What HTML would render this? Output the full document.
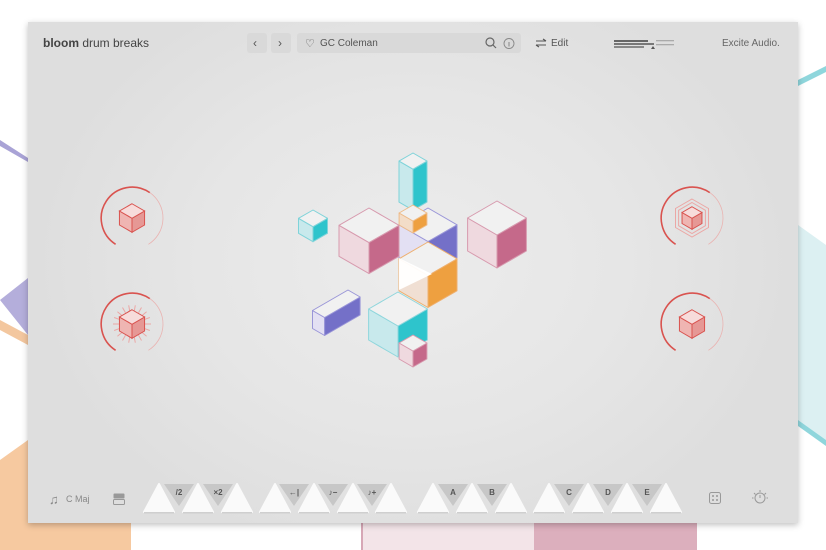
<!DOCTYPE html>
<html><head><meta charset="utf-8">
<style>
*{margin:0;padding:0;box-sizing:border-box}
body{width:826px;height:550px;overflow:hidden;background:#fff;position:relative;font-family:"Liberation Sans",sans-serif}
#bg{position:absolute;left:0;top:0}
#panel{position:absolute;left:28px;top:22px;width:770px;height:501px;background:radial-gradient(ellipse 380px 300px at 385px 240px,#ececec 0%,#e6e6e6 55%,#dedede 100%);box-shadow:0 2px 6px rgba(0,0,0,.25)}
.t{position:absolute;color:#555;font-size:11px;white-space:nowrap}
.btn{position:absolute;background:#d9d9d9;border-radius:3px}
#art{position:absolute;left:0;top:0}
</style></head><body>
<svg id="bg" width="826" height="550">
<polygon points="0,140 28,158 28,162 0,146" fill="#a9a3d6"/>
<polygon points="0,300 28,278 28,335" fill="#b4aedb"/>
<polygon points="0,320 28,335 28,345 0,330" fill="#f3c79f"/>
<polygon points="0,460 28,440 28,550 0,550" fill="#f6c9a0"/>
<rect x="0" y="523" width="131" height="27" fill="#f6c9a0"/>
<rect x="361" y="523" width="173" height="27" fill="#f3e4e8"/>
<rect x="361" y="523" width="2" height="27" fill="#d7a7b6"/>
<rect x="534" y="523" width="163" height="27" fill="#dcafbd"/>
<polygon points="798,80 826,66 826,72 798,86" fill="#8fd6dc"/>
<polygon points="798,225 826,245 826,440 798,420" fill="#dcf0f2"/>
<polygon points="798,420 826,440 826,446 798,426" fill="#8fd6dc"/>
</svg>
<div id="panel">
<div class="t" style="left:15px;top:14px;font-size:12px;color:#444"><b>bloom</b> drum breaks</div>
<div class="btn" style="left:219px;top:11px;width:20px;height:20px"></div>
<div class="btn" style="left:243px;top:11px;width:20px;height:20px"></div>
<div class="t" style="left:225px;top:14px;font-size:12px">‹</div>
<div class="t" style="left:250px;top:14px;font-size:12px">›</div>
<div class="btn" style="left:269px;top:11px;width:224px;height:20px"></div>
<div class="t" style="left:277px;top:15px;font-size:11px">♡</div>
<div class="t" style="left:292px;top:16px;font-size:10px;color:#555">GC Coleman</div>
<svg style="position:absolute;left:457px;top:15px" width="34" height="13"><circle cx="5" cy="5" r="4" fill="none" stroke="#666" stroke-width="1.2"/><line x1="8" y1="8" x2="11" y2="11" stroke="#666" stroke-width="1.2"/><circle cx="24" cy="6.5" r="5" fill="none" stroke="#888" stroke-width=".9"/><line x1="24" y1="5" x2="24" y2="9.5" stroke="#888"/></svg>
<svg style="position:absolute;left:507px;top:16px" width="12" height="10"><path d="M1 3H11M8 1L11 3M11 7H1M4 9L1 7" stroke="#555" fill="none" stroke-width="1.1"/></svg>
<div class="t" style="left:523px;top:16px;font-size:10px">Edit</div>
<svg style="position:absolute;left:586px;top:17px" width="62" height="10"><rect x="0" y="1" width="34" height="2" fill="#666"/><rect x="0" y="4" width="40" height="2" fill="#777"/><rect x="0" y="7" width="30" height="2" fill="#888"/><rect x="42" y="1" width="18" height="1.3" fill="#aaa"/><rect x="42" y="5" width="18" height="1.3" fill="#aaa"/><path d="M39 7l2 3h-4z" fill="#555"/></svg>
<div class="t" style="left:694px;top:16px;font-size:10px;color:#666">Excite Audio.</div>
<div class="t" style="left:21px;top:470px;font-size:13px;color:#888">♫</div>
<div class="t" style="left:38px;top:472px;font-size:9px;color:#888">C Maj</div>
<svg style="position:absolute;left:85px;top:471px" width="12" height="12"><rect x="0.5" y="0.5" width="11" height="5" fill="#999" rx="1"/><rect x="0.5" y="6.5" width="11" height="5" fill="none" stroke="#999" rx="1"/></svg>
<svg style="position:absolute;left:681px;top:470px" width="12" height="12"><rect x=".5" y=".5" width="11" height="11" rx="2" fill="none" stroke="#999"/><circle cx="4" cy="4" r="1" fill="#999"/><circle cx="8" cy="8" r="1" fill="#999"/><circle cx="8" cy="4" r="1" fill="#999"/><circle cx="4" cy="8" r="1" fill="#999"/></svg>
<svg style="position:absolute;left:724px;top:467px" width="16" height="16"><circle cx="8" cy="9" r="5" fill="none" stroke="#999"/><line x1="8" y1="9" x2="8" y2="6" stroke="#999"/><path d="M8 1v2M2 4l1.5 1.5M14 4l-1.5 1.5M0 9h1.5M16 9h-1.5" stroke="#999"/></svg>
</div>
<svg id="art" width="826" height="550"></svg>
<script>
var s='',k=Math.sqrt(3)/2;
function box(ox,oy,dx,dy,dz,top,lf,rf,st){
 var P0=[ox,oy],P1=[ox+dx*k,oy+dx/2],P3=[ox-dy*k,oy+dy/2],P2=[P1[0]-dy*k,P1[1]+dy/2];
 function p(a){return a.map(function(q){return q[0].toFixed(1)+','+q[1].toFixed(1)}).join(' ')}
 function d(q){return [q[0],q[1]+dz]}
 s+='<polygon points="'+p([P3,P2,d(P2),d(P3)])+'" fill="'+lf+'" stroke="'+st+'" stroke-width="1" stroke-linejoin="round"/>';
 s+='<polygon points="'+p([P2,P1,d(P1),d(P2)])+'" fill="'+rf+'" stroke="'+st+'" stroke-width="1" stroke-linejoin="round"/>';
 s+='<polygon points="'+p([P0,P1,P2,P3])+'" fill="'+top+'" stroke="'+st+'" stroke-width="1" stroke-linejoin="round"/>';
}
var T='#f1f1f1';
box(413,153,16.2,16.2,41,T,'#c8e9ec','#2ec4cc','#7fd3d9');
box(428,208,33.5,33.5,33,T,'#e3e0f3','#7470c8','#9a96d8');
box(413,205,16,16,12,T,'#f3ddc8','#eea040','#eebb88');
box(369,208,34.6,34.6,31,T,'#efd9df','#c5698a','#d79aae');
box(428,242,33.5,33.5,32,T,'#f0dfd3','#eea040','#eeb070');
box(497,201,34,34,33,T,'#efd9df','#c5698a','#d79aae');
box(313,210,16.7,16.7,15,T,'#c8e9ec','#2ec4cc','#7fd3d9');
box(348,290,14,41,18,T,'#e3e0f3','#7470c8','#9a96d8');
box(398,292,34,34,31,T,'#c8e9ec','#2ec4cc','#8fd6dc');
box(413,335,16,16,16,T,'#efd9df','#c5698a','#d79aae');
s+='<polygon points="399,258 432,274 399,290" fill="#fff" opacity=".95"/>';
function arc(cx,cy,r,a1,a2){var x1=cx+r*Math.sin(a1*Math.PI/180),y1=cy-r*Math.cos(a1*Math.PI/180),x2=cx+r*Math.sin(a2*Math.PI/180),y2=cy-r*Math.cos(a2*Math.PI/180);var l=(a2-a1)>180?1:0;return 'M'+x1.toFixed(1)+' '+y1.toFixed(1)+'A'+r+' '+r+' 0 '+l+' 1 '+x2.toFixed(1)+' '+y2.toFixed(1)}
[[132,218],[132,324],[692,218],[692,324]].forEach(function(c,i){
 s+='<path d="'+arc(c[0],c[1],31,-148,35)+'" fill="none" stroke="#d9534f" stroke-width="1.6"/>';
 s+='<path d="'+arc(c[0],c[1],31,35,148)+'" fill="none" stroke="#eab3b1" stroke-width=".8"/>';
 var x=c[0],y=c[1];
 if(i==1){for(var a=0;a<360;a+=20){var r1=13,r2=19;s+='<line x1="'+(x+r1*Math.cos(a*Math.PI/180))+'" y1="'+(y+r1*Math.sin(a*Math.PI/180))+'" x2="'+(x+r2*Math.cos(a*Math.PI/180))+'" y2="'+(y+r2*Math.sin(a*Math.PI/180))+'" stroke="#eba7a5" stroke-width="1"/>';}}
 if(i==2){s+='<polygon points="'+x+','+(y-19)+' '+(x+16.5)+','+(y-9.5)+' '+(x+16.5)+','+(y+9.5)+' '+x+','+(y+19)+' '+(x-16.5)+','+(y+9.5)+' '+(x-16.5)+','+(y-9.5)+'" fill="none" stroke="#eba7a5"/>';
 s+='<polygon points="'+x+','+(y-15.5)+' '+(x+13.4)+','+(y-7.7)+' '+(x+13.4)+','+(y+7.7)+' '+x+','+(y+15.5)+' '+(x-13.4)+','+(y+7.7)+' '+(x-13.4)+','+(y-7.7)+'" fill="none" stroke="#eba7a5"/>';}
 var L=(i==2)?11.5:14.5, h=(i==2)?11:14; var ox=x,oy=y-(L+h)/2;
 var P1=[ox+L*k,oy+L/2],P3=[ox-L*k,oy+L/2],P2=[ox,oy+L];
 s+='<polygon points="'+P3+' '+P2+' '+P2[0]+','+(P2[1]+h)+' '+P3[0]+','+(P3[1]+h)+'" fill="#efb5b2" stroke="#d9534f"/>';
 s+='<polygon points="'+P2+' '+P1+' '+P1[0]+','+(P1[1]+h)+' '+P2[0]+','+(P2[1]+h)+'" fill="#e69895" stroke="#d9534f"/>';
 s+='<polygon points="'+ox+','+oy+' '+P1+' '+P2+' '+P3+'" fill="#f7dcdb" stroke="#d9534f"/>';
});
var up=[159,198,237,275,314,353,391,433,472,511,549,588,627,666];
var dn=[[179,'/2'],[218,'×2'],[294,'←|'],[333,'♪−'],[372,'♪+'],[453,'A'],[492,'B'],[569,'C'],[608,'D'],[647,'E']];
dn.forEach(function(d){var x=d[0];s+='<polygon points="'+(x-15)+',484 '+(x+15)+',484 '+x+',506" fill="#c7c7c7"/><text x="'+x+'" y="495" font-size="8" text-anchor="middle" fill="#555" font-family="Liberation Sans,sans-serif" font-weight="bold">'+d[1]+'</text>';});
up.forEach(function(x){s+='<polygon points="'+(x-15)+',512 '+(x+15)+',512 '+x+',484" fill="#fafafa" stroke="#fafafa" stroke-width="2" stroke-linejoin="round"/><rect x="'+(x-15)+'" y="512" width="30" height="1.5" fill="#cfcfcf"/>';});
document.getElementById('art').innerHTML=s;
</script>
</body></html>
